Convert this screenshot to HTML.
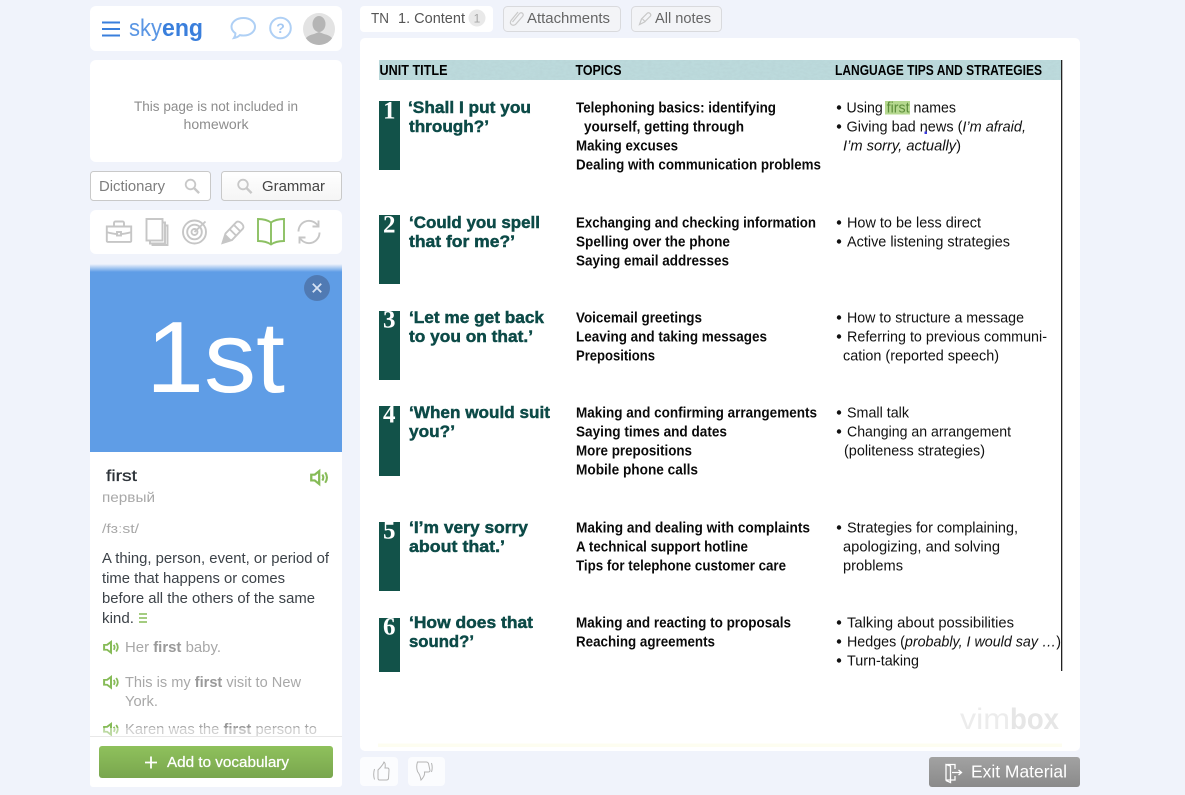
<!DOCTYPE html>
<html><head><meta charset="utf-8"><title>Skyeng vimbox</title>
<style>
html,body{margin:0;padding:0;width:1185px;height:795px;overflow:hidden;background:#f0f3fb}
svg{display:block;position:absolute;left:0;top:0}
text{font-family:"Liberation Sans",sans-serif}
.t{font-size:14.5px;font-weight:bold;fill:#0a0a0a}
.h{font-size:15px;font-weight:bold;fill:#000}
.l{font-size:14.5px;fill:#111}
.u{font-size:16.5px;font-weight:bold;fill:#0c4a47;stroke:#0c4a47;stroke-width:.45}
text.n{font-size:25px;font-weight:bold;fill:#fff;font-family:"Liberation Serif",serif}
.g{fill:none;stroke:#c6c6c6;stroke-width:1.9}
</style></head><body>
<svg width="1185" height="795" viewBox="0 0 1185 795" xmlns="http://www.w3.org/2000/svg">
<defs>
<linearGradient id="gb" x1="0" y1="0" x2="0" y2="1"><stop offset="0" stop-color="#8fc15c"/><stop offset="1" stop-color="#79a64e"/></linearGradient>
<linearGradient id="ge" x1="0" y1="0" x2="0" y2="1"><stop offset="0" stop-color="#a2a2a2"/><stop offset="1" stop-color="#8a8a8a"/></linearGradient>
<linearGradient id="gt" x1="0" y1="0" x2="0" y2="1"><stop offset="0" stop-color="#f0f3fb"/><stop offset="1" stop-color="#5f9de6"/></linearGradient>
<linearGradient id="gg" x1="0" y1="0" x2="0" y2="1"><stop offset="0" stop-color="#ffffff"/><stop offset="1" stop-color="#f5f5f5"/></linearGradient>
<clipPath id="av"><circle cx="319" cy="29" r="16"/></clipPath>
<filter id="nz" x="0" y="0" width="100%" height="100%"><feTurbulence type="fractalNoise" baseFrequency=".25 .5" numOctaves="2" seed="4"/><feColorMatrix values="0 0 0 0 .45  0 0 0 0 .6  0 0 0 0 .62  0 0 0 1.4 -.5"/></filter>
<g id="spk"><path d="M1.100 4.300h3l3.900-3.300v12l-3.900-3.300h-3z" fill="none" stroke="#86bb57" stroke-width="2"/><path d="M10.700 4.200q1.800 2.800 0 5.600M13.200 2.200q3.100 4.800 0 9.600" fill="none" stroke="#86bb57" stroke-width="1.800"/></g>
<g id="mag"><circle cx="6" cy="6" r="4.800" fill="none" stroke="#c8c8c8" stroke-width="1.800"/><path d="M9.600 9.600l5 5" stroke="#c8c8c8" stroke-width="2.400"/></g>
</defs>

<!-- left: header -->
<rect x="90" y="6" width="252" height="45" rx="6" fill="#fff"/>
<path d="M102 22.500h18M102 29h18M102 35.500h18" stroke="#3a7fdc" stroke-width="2"/>
<text x="129" y="36" font-size="24" fill="#5a96e4" textLength="33" lengthAdjust="spacingAndGlyphs">sky</text>
<text x="162" y="36" font-size="24" font-weight="bold" fill="#3a7fdc" textLength="41" lengthAdjust="spacingAndGlyphs">eng</text>
<path d="M243.500 18c6.500 0 11.500 3.800 11.500 8.800s-5 8.700-11.500 8.700c-1.300 0-2.500-.1-3.600-.4-1.600 1.600-3.400 2.500-5.900 2.900 1-1.400 1.500-2.800 1.400-4.700-2.300-1.600-3.900-3.900-3.900-6.500 0-5 5-8.800 12-8.800z" fill="none" stroke="#afd0f5" stroke-width="2"/>
<circle cx="280.500" cy="28" r="10.300" fill="none" stroke="#afd0f5" stroke-width="2"/>
<text x="280.500" y="33" font-size="14" font-weight="bold" fill="#a4c8f2" text-anchor="middle">?</text>
<circle cx="319" cy="29" r="16" fill="#e3e3e3"/>
<g clip-path="url(#av)" fill="#b5b5b5"><ellipse cx="319" cy="24" rx="6.500" ry="8"/><path d="M303 46c0-8 6-11 11-12l5-2 5 2c5 1 11 4 11 12z"/></g>

<!-- homework -->
<rect x="90" y="60" width="252" height="102" rx="6" fill="#fff"/>
<g font-size="13.500" fill="#8d8d8d" text-anchor="middle">
<text x="216" y="111" textLength="164" lengthAdjust="spacingAndGlyphs">This page is not included in</text>
<text x="216" y="129" textLength="65" lengthAdjust="spacingAndGlyphs">homework</text>
</g>

<!-- search -->
<rect x="90.500" y="171.500" width="120" height="29" rx="3" fill="#fff" stroke="#c9c9c9"/>
<text x="99" y="191" font-size="14.500" fill="#7e7e7e" textLength="66" lengthAdjust="spacingAndGlyphs">Dictionary</text>
<use href="#mag" x="184.500" y="178.500"/>
<rect x="221.500" y="171.500" width="120" height="29" rx="3" fill="url(#gg)" stroke="#c9c9c9"/>
<use href="#mag" x="237" y="178.500"/>
<text x="262" y="191" font-size="14.500" fill="#444" textLength="63" lengthAdjust="spacingAndGlyphs">Grammar</text>

<!-- tools -->
<rect x="90" y="210" width="252" height="44" rx="6" fill="#fff"/>
<g class="g">
<path d="M106.800 226.500h24.400v14.500a.9.900 0 0 1-.9.900h-22.600a.9.900 0 0 1-.9-.9z M106.800 227v5c0 .5 8 2 10 2M131.200 227v5c0 .5-8 2-10 2M114 226.500v-3.500a1.500 1.500 0 0 1 1.500-1.500h7a1.500 1.500 0 0 1 1.500 1.500v3.500"/>
<rect x="117" y="232" width="4" height="3.500"/>
<rect x="146.500" y="219" width="16" height="21.500" fill="#fff"/>
<path d="M162.500 222.500h2.500v21h-15v-3M165 225.500h2.500v19.500h-15v-1.200"/>
<circle cx="194.500" cy="232" r="11.500"/><circle cx="194.500" cy="232" r="7.300"/><circle cx="194.500" cy="232" r="3"/>
<path d="M194.500 232l11-10.500"/>
<path d="M222.500 243l3-9.500 11-11.500c3-2 8.500 3.500 6.500 6.500l-11 11.500z M230 229.500l6.500 6.500M234.500 225.500l6 6"/>
<path d="M298.500 231.500a10.500 10.500 0 0 1 18-7.500l2 2M319.500 232.500a10.500 10.500 0 0 1-18 7.500l-2-2M318.500 220.500v6h-6M299.500 243.500v-6h6"/>
</g>
<path d="M222 243.500l3.500-9.500 6 6z" fill="#c6c6c6"/>
<path d="M258 219c5 0 9.500 1 13 3.500 3.500-2.500 8-3.500 13-3.500v22c-5 0-9.500 1-13 3.500-3.500-2.500-8-3.500-13-3.500zM271 222.500v22" fill="none" stroke="#8cc063" stroke-width="1.900"/>

<!-- image card -->
<rect x="90" y="265" width="252" height="522" rx="5" fill="#fff"/>
<path d="M90 270a5 5 0 0 1 5-5h242a5 5 0 0 1 5 5v182H90z" fill="#5f9de6"/>
<rect x="90" y="264" width="252" height="8" fill="url(#gt)"/>
<text x="146" y="392" font-size="101" fill="#fff" textLength="139" lengthAdjust="spacingAndGlyphs">1st</text>
<circle cx="317" cy="288" r="13" fill="#4f77ad" opacity=".9"/>
<path d="M312.800 283.800l8.400 8.400M321.200 283.800l-8.400 8.400" stroke="#d6e2f3" stroke-width="1.800"/>

<!-- word -->
<text x="106" y="481" font-size="16" fill="#2c3238" stroke="#2c3238" stroke-width=".3" textLength="31" lengthAdjust="spacingAndGlyphs">first</text>
<use href="#spk" transform="translate(310 470) scale(1.150 1.080)"/>
<text x="102" y="502" font-size="14" fill="#a8a8a8" textLength="53" lengthAdjust="spacingAndGlyphs">первый</text>
<text x="102" y="533" font-size="13" fill="#a8a8a8" textLength="37" lengthAdjust="spacingAndGlyphs">/fɜːst/</text>
<g font-size="14.500" fill="#3c4248">
<text x="102" y="563" textLength="227" lengthAdjust="spacingAndGlyphs">A thing, person, event, or period of</text>
<text x="102" y="583" textLength="183" lengthAdjust="spacingAndGlyphs">time that happens or comes</text>
<text x="102" y="603" textLength="213" lengthAdjust="spacingAndGlyphs">before all the others of the same</text>
<text x="102" y="623" textLength="32" lengthAdjust="spacingAndGlyphs">kind.</text>
</g>
<path d="M139 614h8M139 618h8M139 622h8" stroke="#86bb57" stroke-width="1.500"/>
<use href="#spk" transform="translate(103 641) scale(1 .9)"/>
<text x="125" y="652" font-size="14.500" fill="#a8a8a8" textLength="96" lengthAdjust="spacingAndGlyphs">Her <tspan font-weight="bold" fill="#999">first</tspan> baby.</text>
<use href="#spk" transform="translate(103 676) scale(1 .9)"/>
<text x="125" y="687" font-size="14.500" fill="#a8a8a8" textLength="176" lengthAdjust="spacingAndGlyphs">This is my <tspan font-weight="bold" fill="#999">first</tspan> visit to New</text>
<text x="125" y="706" font-size="14.500" fill="#a8a8a8" textLength="33" lengthAdjust="spacingAndGlyphs">York.</text>
<use href="#spk" transform="translate(103 723) scale(1 .9)"/>
<text x="125" y="734" font-size="14.500" fill="#a8a8a8" textLength="192" lengthAdjust="spacingAndGlyphs">Karen was the <tspan font-weight="bold" fill="#999">first</tspan> person to</text>
<rect x="90" y="728" width="252" height="8" fill="#fff" opacity=".45"/>
<rect x="90" y="736" width="252" height="51" rx="3" fill="#fff"/>
<rect x="90" y="736" width="252" height="1" fill="#e8e8e8"/>
<rect x="99" y="746" width="234" height="32" rx="3" fill="url(#gb)"/>
<path d="M145 762.500h12M151 756.500v12" stroke="#fff" stroke-width="1.800"/>
<text x="167" y="767" font-size="14.500" fill="#fff" stroke="#fff" stroke-width=".25" textLength="122" lengthAdjust="spacingAndGlyphs">Add to vocabulary</text>

<!-- tabs -->
<rect x="360" y="6" width="133" height="26" rx="4" fill="#fff"/>
<text x="371" y="23" font-size="14.500" fill="#555" textLength="18" lengthAdjust="spacingAndGlyphs">TN</text>
<text x="398" y="23" font-size="14.500" fill="#555" textLength="67" lengthAdjust="spacingAndGlyphs">1. Content</text>
<circle cx="477" cy="18" r="8.500" fill="#e9e9e9"/>
<text x="477" y="22.500" font-size="12" fill="#a5a5a5" text-anchor="middle">1</text>
<rect x="503.500" y="6.500" width="117" height="25" rx="4" fill="#f3f4f7" stroke="#d9dadd"/>
<path d="M512.500 22l7-8.500c2-2 5 .5 3 3l-7 8c-3 2-6.500-.5-4.500-4l7-8.500" fill="none" stroke="#cacaca" stroke-width="1.200"/>
<text x="527" y="23" font-size="14.500" fill="#666" textLength="83" lengthAdjust="spacingAndGlyphs">Attachments</text>
<rect x="631.500" y="6.500" width="90" height="25" rx="4" fill="#f3f4f7" stroke="#d9dadd"/>
<path d="M639.500 24.500l2-5.500 6-6c2-1 4 1.500 3 3l-6 6z M642.500 19l3 3" fill="none" stroke="#c8c8c8" stroke-width="1.200"/>
<text x="655" y="23" font-size="14.500" fill="#666" textLength="56" lengthAdjust="spacingAndGlyphs">All notes</text>

<!-- main -->
<rect x="360" y="38" width="720" height="713" rx="5" fill="#fff"/>
<rect x="378" y="743.500" width="684" height="3.500" fill="#fdfdf0"/>
<rect x="379" y="60" width="682" height="20" fill="#bcdadc"/>
<rect x="379" y="60" width="682" height="20" filter="url(#nz)" opacity=".5"/>
<rect x="1061" y="60" width="1.300" height="611" fill="#222"/>
<text class="h" x="379.500" y="75" textLength="68" lengthAdjust="spacingAndGlyphs">UNIT TITLE</text>
<text class="h" x="575.500" y="75" textLength="46" lengthAdjust="spacingAndGlyphs">TOPICS</text>
<text class="h" x="835" y="75" textLength="207" lengthAdjust="spacingAndGlyphs">LANGUAGE TIPS AND STRATEGIES</text>

<!-- number blocks -->
<g fill="#125249">
<rect x="379" y="101" width="21" height="69"/>
<rect x="379" y="215" width="21" height="69"/>
<rect x="379" y="311" width="21" height="69"/>
<rect x="379" y="406" width="21" height="70"/>
<rect x="379" y="522" width="21" height="69"/>
<rect x="379" y="618" width="21" height="54"/>
</g>
<text class="n" x="383" y="118.500">1</text>
<text class="n" x="383" y="232.500">2</text>
<text class="n" x="383" y="327.500">3</text>
<text class="n" x="383" y="422.500">4</text>
<text class="n" x="383" y="538.500">5</text>
<text class="n" x="383" y="634.500">6</text>

<!-- unit titles -->
<text class="u" x="408" y="113" textLength="123" lengthAdjust="spacingAndGlyphs">‘Shall I put you</text>
<text class="u" x="409" y="132" textLength="80" lengthAdjust="spacingAndGlyphs">through?’</text>
<text class="u" x="409" y="228" textLength="131" lengthAdjust="spacingAndGlyphs">‘Could you spell</text>
<text class="u" x="409" y="247" textLength="106" lengthAdjust="spacingAndGlyphs">that for me?’</text>
<text class="u" x="409" y="323" textLength="135" lengthAdjust="spacingAndGlyphs">‘Let me get back</text>
<text class="u" x="409" y="342" textLength="124" lengthAdjust="spacingAndGlyphs">to you on that.’</text>
<text class="u" x="409" y="418" textLength="141" lengthAdjust="spacingAndGlyphs">‘When would suit</text>
<text class="u" x="409" y="437" textLength="46" lengthAdjust="spacingAndGlyphs">you?’</text>
<text class="u" x="409" y="533" textLength="119" lengthAdjust="spacingAndGlyphs">‘I’m very sorry</text>
<text class="u" x="409" y="552" textLength="96" lengthAdjust="spacingAndGlyphs">about that.’</text>
<text class="u" x="409" y="628" textLength="124" lengthAdjust="spacingAndGlyphs">‘How does that</text>
<text class="u" x="409" y="647" textLength="65" lengthAdjust="spacingAndGlyphs">sound?’</text>

<!-- topics -->
<g transform="translate(0 -.4)">
<text class="t" x="576" y="113" textLength="200" lengthAdjust="spacingAndGlyphs">Telephoning basics: identifying</text>
<text class="t" x="584" y="132" textLength="160" lengthAdjust="spacingAndGlyphs">yourself, getting through</text>
<text class="t" x="576" y="151" textLength="102" lengthAdjust="spacingAndGlyphs">Making excuses</text>
<text class="t" x="576" y="170" textLength="245" lengthAdjust="spacingAndGlyphs">Dealing with communication problems</text>
<text class="t" x="576" y="228" textLength="240" lengthAdjust="spacingAndGlyphs">Exchanging and checking information</text>
<text class="t" x="576" y="247" textLength="154" lengthAdjust="spacingAndGlyphs">Spelling over the phone</text>
<text class="t" x="576" y="266" textLength="153" lengthAdjust="spacingAndGlyphs">Saying email addresses</text>
<text class="t" x="576" y="323" textLength="126" lengthAdjust="spacingAndGlyphs">Voicemail greetings</text>
<text class="t" x="576" y="342" textLength="191" lengthAdjust="spacingAndGlyphs">Leaving and taking messages</text>
<text class="t" x="576" y="361" textLength="79" lengthAdjust="spacingAndGlyphs">Prepositions</text>
<text class="t" x="576" y="418" textLength="241" lengthAdjust="spacingAndGlyphs">Making and confirming arrangements</text>
<text class="t" x="576" y="437" textLength="151" lengthAdjust="spacingAndGlyphs">Saying times and dates</text>
<text class="t" x="576" y="456" textLength="116" lengthAdjust="spacingAndGlyphs">More prepositions</text>
<text class="t" x="576" y="475" textLength="122" lengthAdjust="spacingAndGlyphs">Mobile phone calls</text>
<text class="t" x="576" y="533" textLength="234" lengthAdjust="spacingAndGlyphs">Making and dealing with complaints</text>
<text class="t" x="576" y="552" textLength="172" lengthAdjust="spacingAndGlyphs">A technical support hotline</text>
<text class="t" x="576" y="571" textLength="210" lengthAdjust="spacingAndGlyphs">Tips for telephone customer care</text>
<text class="t" x="576" y="628" textLength="215" lengthAdjust="spacingAndGlyphs">Making and reacting to proposals</text>
<text class="t" x="576" y="647" textLength="139" lengthAdjust="spacingAndGlyphs">Reaching agreements</text>
</g>

<!-- tips -->
<rect x="885" y="101" width="25" height="13.500" fill="#b5d88f"/>
<g fill="#111" transform="translate(0 -.5)">
<circle cx="839" cy="108" r="2.200"/><circle cx="839" cy="127" r="2.200"/>
<circle cx="839" cy="223" r="2.200"/><circle cx="839" cy="242" r="2.200"/>
<circle cx="839" cy="318" r="2.200"/><circle cx="839" cy="337" r="2.200"/>
<circle cx="839" cy="413" r="2.200"/><circle cx="839" cy="432" r="2.200"/>
<circle cx="839" cy="528" r="2.200"/>
<circle cx="839" cy="623" r="2.200"/><circle cx="839" cy="642" r="2.200"/><circle cx="839" cy="661" r="2.200"/>
</g>
<g transform="translate(0 -.4)">
<text class="l" x="846.500" y="113" textLength="109.500" lengthAdjust="spacingAndGlyphs">Using <tspan fill="#5c8d3a">first</tspan> names</text>
<text class="l" x="846.500" y="132" textLength="179.500" lengthAdjust="spacingAndGlyphs">Giving bad news (<tspan font-style="italic">I’m afraid,</tspan></text>
<text class="l" x="843" y="151" textLength="118" lengthAdjust="spacingAndGlyphs" font-style="italic">I’m sorry, actually<tspan font-style="normal">)</tspan></text>
<text class="l" x="847" y="228" textLength="134" lengthAdjust="spacingAndGlyphs">How to be less direct</text>
<text class="l" x="847" y="247" textLength="163" lengthAdjust="spacingAndGlyphs">Active listening strategies</text>
<text class="l" x="847" y="323" textLength="177" lengthAdjust="spacingAndGlyphs">How to structure a message</text>
<text class="l" x="847" y="342" textLength="200" lengthAdjust="spacingAndGlyphs">Referring to previous communi-</text>
<text class="l" x="843" y="361" textLength="156" lengthAdjust="spacingAndGlyphs">cation (reported speech)</text>
<text class="l" x="847" y="418" textLength="62" lengthAdjust="spacingAndGlyphs">Small talk</text>
<text class="l" x="847" y="437" textLength="164" lengthAdjust="spacingAndGlyphs">Changing an arrangement</text>
<text class="l" x="844" y="456" textLength="141" lengthAdjust="spacingAndGlyphs">(politeness strategies)</text>
<text class="l" x="847" y="533" textLength="171" lengthAdjust="spacingAndGlyphs">Strategies for complaining,</text>
<text class="l" x="843" y="552" textLength="157" lengthAdjust="spacingAndGlyphs">apologizing, and solving</text>
<text class="l" x="843" y="571" textLength="60" lengthAdjust="spacingAndGlyphs">problems</text>
<text class="l" x="847" y="628" textLength="167" lengthAdjust="spacingAndGlyphs">Talking about possibilities</text>
<text class="l" x="847" y="647" textLength="214" lengthAdjust="spacingAndGlyphs">Hedges (<tspan font-style="italic">probably, I would say …</tspan>)</text>
<text class="l" x="847" y="666" textLength="72" lengthAdjust="spacingAndGlyphs">Turn-taking</text>
</g>
<rect x="924.500" y="131.500" width="2.500" height="2.500" fill="#3a3ae0"/>

<!-- vimbox -->
<text x="960" y="729" font-size="30" fill="#ececec" textLength="50" lengthAdjust="spacingAndGlyphs">vim</text>
<text x="1010" y="729" font-size="30" font-weight="bold" fill="#e6e6e6" textLength="49" lengthAdjust="spacingAndGlyphs">box</text>

<!-- bottom -->
<rect x="360" y="757" width="38" height="29" rx="4" fill="#fbfcfe"/>
<rect x="408" y="757" width="37" height="29" rx="4" fill="#fbfcfe"/>
<path d="M384 762c1.500 1 1.500 3 1 6h2.500c1 0 1.500 1 1.500 2l-.5 8.500c-.2 1-1 1.500-2 1.500h-7c-1 0-1.500-.5-1.500-2v-8c2-2 5-5 6-8zM374.500 769c-1 3.500-1 7.500 0 10.500" fill="none" stroke="#b4b4b4" stroke-width="1"/>
<path d="M417.500 762h9c1 0 1.500.5 2 1.500l1.500 7c0 1-1 1.500-2 1.500h-3.500c.5 2.500-.5 5-3.500 8-.5-3-1.500-6-3.500-8.500-1-3-1-6.500 0-9.500zM431.500 763c1 3.500 1 6 0 9" fill="none" stroke="#b4b4b4" stroke-width="1"/>
<rect x="929" y="757" width="151" height="30" rx="3" fill="url(#ge)"/>
<path d="M946 764.500h9v4.500M955 776v4h-9v-15.500l4.500 1.500v16.500l-4.500-2" fill="none" stroke="#fff" stroke-width="1.300"/>
<path d="M952 772.500h9M958.500 770l3 2.500-3 2.500" fill="none" stroke="#fff" stroke-width="1.300"/>
<text x="971" y="777.500" font-size="17.500" fill="#fff" textLength="96" lengthAdjust="spacingAndGlyphs">Exit Material</text>
</svg>
</body></html>
